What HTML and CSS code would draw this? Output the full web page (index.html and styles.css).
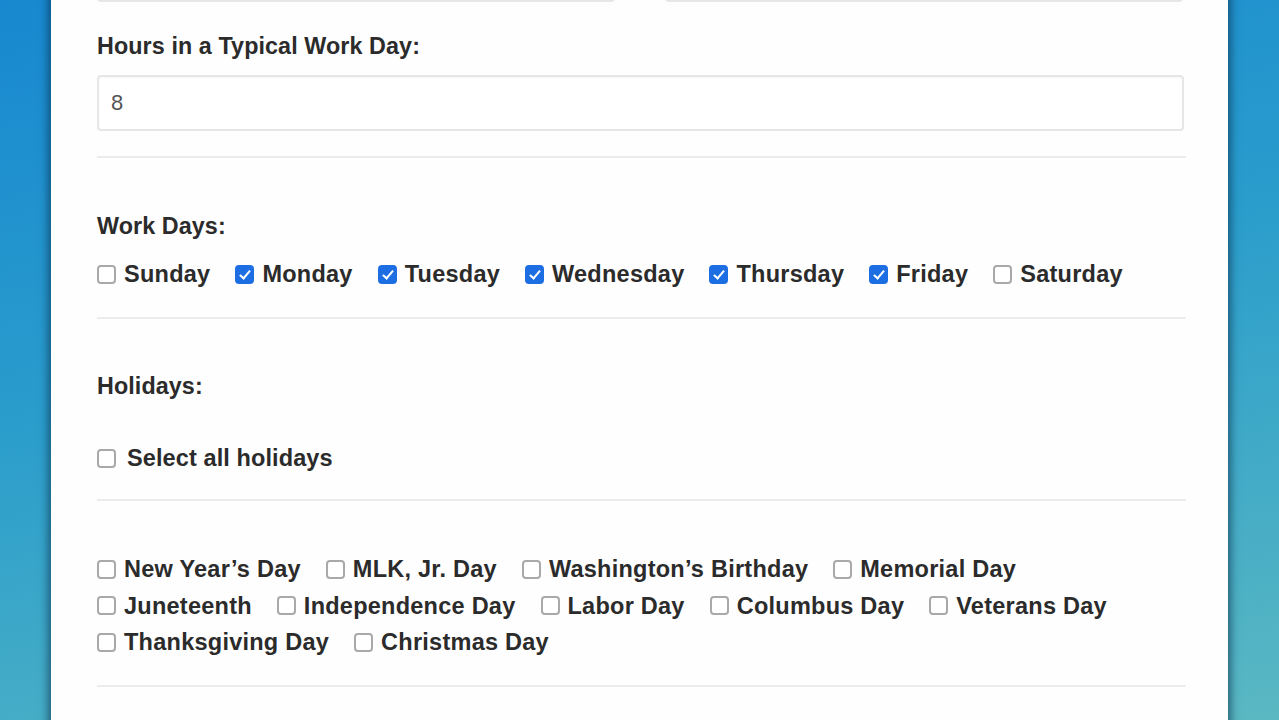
FILE: index.html
```html
<!DOCTYPE html>
<html lang="en">
<head>
<meta charset="utf-8">
<title>Work Days Calculator</title>
<link rel="stylesheet" href="styles.css">
</head>
<body>
<main class="card">
  <div class="top-row">
    <input class="text-input" type="text" value="">
    <input class="text-input" type="text" value="">
  </div>

  <section class="section hours">
    <label class="field-label" for="hours">Hours in a Typical Work Day:</label>
    <input id="hours" class="text-input" type="text" value="8">
  </section>

  <section class="section workdays">
    <div class="field-label">Work Days:</div>
    <div class="check-row">
      <label class="check"><span class="box"></span>Sunday</label>
      <label class="check"><span class="box on"></span>Monday</label>
      <label class="check"><span class="box on"></span>Tuesday</label>
      <label class="check"><span class="box on"></span>Wednesday</label>
      <label class="check"><span class="box on"></span>Thursday</label>
      <label class="check"><span class="box on"></span>Friday</label>
      <label class="check"><span class="box"></span>Saturday</label>
    </div>
  </section>

  <section class="section holidays">
    <div class="field-label">Holidays:</div>
    <label class="check select-all"><span class="box"></span>Select all holidays</label>
  </section>

  <section class="section holiday-list">
    <div class="check-row">
      <label class="check"><span class="box"></span>New Year’s Day</label>
      <label class="check"><span class="box"></span>MLK, Jr. Day</label>
      <label class="check"><span class="box"></span>Washington’s Birthday</label>
      <label class="check"><span class="box"></span>Memorial Day</label>
    </div>
    <div class="check-row">
      <label class="check"><span class="box"></span>Juneteenth</label>
      <label class="check"><span class="box"></span>Independence Day</label>
      <label class="check"><span class="box"></span>Labor Day</label>
      <label class="check"><span class="box"></span>Columbus Day</label>
      <label class="check"><span class="box"></span>Veterans Day</label>
    </div>
    <div class="check-row">
      <label class="check"><span class="box"></span>Thanksgiving Day</label>
      <label class="check"><span class="box"></span>Christmas Day</label>
    </div>
  </section>
</main>
</body>
</html>
```

FILE: styles.css
```css
html, body {
  margin: 0;
  height: 100%;
  overflow: hidden;
}

body {
  background: linear-gradient(170deg, #1888d0 0%, #2a9dcc 45%, #5ab8c2 100%);
  font-family: "Liberation Sans", Arial, sans-serif;
  color: #2e2e2e;
}

.card {
  margin-left: 51px;
  width: 1177px;
  height: 820px;
  margin-top: -54px;
  background: #fefefe;
  box-shadow: 0 0 8px 3px rgba(10, 45, 75, 0.6);
  box-sizing: border-box;
  padding: 0 42px 0 46px;
}

.top-row {
  display: grid;
  grid-template-columns: 518px 518px;
  column-gap: 50px;
}

.text-input {
  display: block;
  box-sizing: border-box;
  height: 56px;
  width: 100%;
  border: 2px solid #e6e6e6;
  border-radius: 4px;
  background: #fff;
  box-shadow: inset 0 1px 2px rgba(0, 0, 0, 0.04);
  padding: 0 0 0 12px;
  font-family: "Liberation Sans", Arial, sans-serif;
  font-size: 22px;
  color: #555;
  outline: none;
}

.section {
  border-bottom: 2px solid #ececec;
  display: flex;
  flex-direction: column;
  align-items: flex-start;
}

.hours {
  padding: 31px 0 25px;
  gap: 16px;
}

.hours .text-input {
  width: 1087px;
}

.field-label {
  font-size: 23.3px;
  font-weight: bold;
  line-height: 26px;
  color: #2b2b2b;
  letter-spacing: 0.1px;
}

.workdays {
  padding: 55px 0 30px;
  gap: 22px;
}

.holidays {
  padding: 54px 0 28px;
  gap: 46px;
}

.holiday-list {
  padding: 55px 0 30px;
  gap: 10.5px;
}

.check-row {
  display: flex;
  flex-wrap: wrap;
  column-gap: 25px;
}

.check {
  display: flex;
  align-items: center;
  gap: 8px;
  font-size: 23.5px;
  font-weight: bold;
  line-height: 26px;
  color: #2b2b2b;
  letter-spacing: 0.25px;
}

.select-all {
  gap: 11px;
  letter-spacing: 0.1px;
}

.box {
  width: 19px;
  height: 19px;
  box-sizing: border-box;
  border: 2px solid #a9a9a9;
  border-radius: 4px;
  background: #fff;
  position: relative;
  flex: none;
}

.box.on {
  background: #1d6ee3;
  border-color: #1d6ee3;
}

.box.on::after {
  content: "";
  position: absolute;
  left: 5px;
  top: 1px;
  width: 4px;
  height: 9px;
  border: solid #fff;
  border-width: 0 2.5px 2.5px 0;
  transform: rotate(40deg);
}
```
